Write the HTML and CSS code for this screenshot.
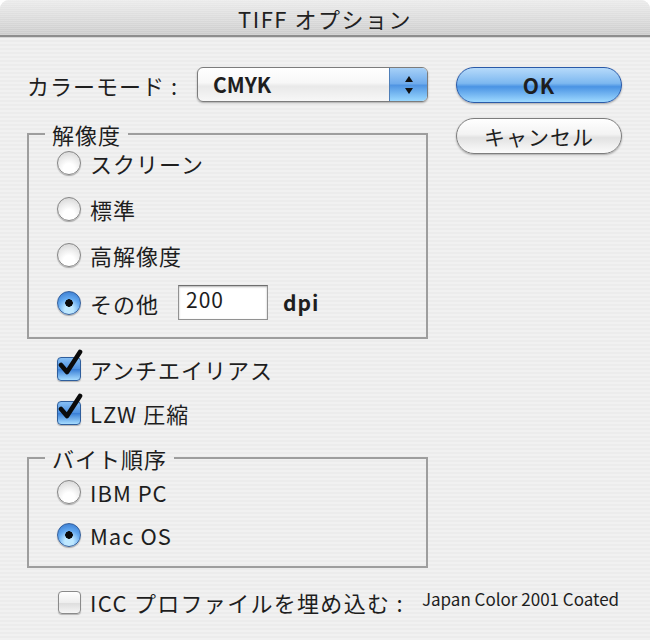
FILE: index.html
```html
<!DOCTYPE html>
<html lang="ja">
<head>
<meta charset="utf-8">
<title>TIFF オプション</title>
<link rel="stylesheet" href="styles.css">
</head>
<body>
<div class="dialog">
  <div class="titlebar">TIFF オプション</div>
  <div class="content">
    <div class="main">
      <div class="left">
        <div class="mode-row">
          <span class="label">カラーモード :</span>
          <div class="popup">
            <span class="popup-value">CMYK</span>
            <span class="stepper">
              <svg width="12" height="24" viewBox="0 0 12 24"><path d="M6 3 L10 9 L2 9 Z" fill="#111"/><path d="M2 15 L10 15 L6 21 Z" fill="#111"/></svg>
            </span>
          </div>
        </div>

        <fieldset class="group res">
          <legend>解像度</legend>
          <div class="options">
            <div class="opt"><span class="radio"></span><span>スクリーン</span></div>
            <div class="opt"><span class="radio"></span><span>標準</span></div>
            <div class="opt"><span class="radio"></span><span>高解像度</span></div>
            <div class="opt opt-field"><span class="radio on"></span><span>その他</span><span class="field">200</span><span class="unit">dpi</span></div>
          </div>
        </fieldset>

        <div class="checks">
          <div class="opt check-row"><span class="check on"><svg class="tick" width="28" height="30" viewBox="0 0 28 30"><path d="M5 16 L11 23 L24 3" fill="none" stroke="#0b0b0b" stroke-width="4.6" stroke-linecap="round" stroke-linejoin="round"/></svg></span><span>アンチエイリアス</span></div>
          <div class="opt check-row"><span class="check on"><svg class="tick" width="28" height="30" viewBox="0 0 28 30"><path d="M5 16 L11 23 L24 3" fill="none" stroke="#0b0b0b" stroke-width="4.6" stroke-linecap="round" stroke-linejoin="round"/></svg></span><span>LZW 圧縮</span></div>
        </div>

        <fieldset class="group order">
          <legend>バイト順序</legend>
          <div class="options order-options">
            <div class="opt"><span class="radio"></span><span>IBM PC</span></div>
            <div class="opt"><span class="radio on"></span><span>Mac OS</span></div>
          </div>
        </fieldset>
      </div>

      <div class="buttons">
        <div class="btn btn-default">OK</div>
        <div class="btn">キャンセル</div>
      </div>
    </div>

    <div class="icc-row">
      <span class="check"></span>
      <span class="icc-label">ICC プロファイルを埋め込む :</span>
      <span class="profile">Japan Color 2001 Coated</span>
    </div>
  </div>
</div>
</body>
</html>
```

FILE: styles.css
```css
html, body {
  margin: 0;
  background: #ffffff;
}

body {
  font-family: "Noto Sans CJK JP", "DejaVu Sans", sans-serif;
  color: #1e1e1e;
}

.dialog {
  width: 650px;
  height: 640px;
  border-radius: 9px 9px 0 0;
  overflow: hidden;
  background: repeating-linear-gradient(to bottom, #ececec 0 2px, #f1f1f1 2px 4px);
}

.titlebar {
  height: 35px;
  border-bottom: 2px solid #8e8e8e;
  box-shadow: 0 1px 0 #d6d6d6;
  background:
    repeating-linear-gradient(to bottom, rgba(255,255,255,0.18) 0 1px, rgba(0,0,0,0) 1px 2px),
    linear-gradient(#ebebeb, #d9d9d9 60%, #cbcbcb);
  display: flex;
  align-items: center;
  justify-content: center;
  font-size: 22px;
  letter-spacing: 1.5px;
  color: #222;
  line-height: 1;
}

.content {
  padding: 30px 0 0 27px;
}

.main {
  display: flex;
  gap: 28px;
}

.left {
  width: 401px;
  display: flex;
  flex-direction: column;
}

.mode-row {
  display: flex;
  align-items: center;
  height: 35px;
}

.label {
  width: 170px;
  font-size: 22px;
  line-height: 1;
  letter-spacing: 1px;
}

.popup {
  width: 231px;
  height: 35px;
  box-sizing: border-box;
  border: 1px solid #7c7c7c;
  border-radius: 6px;
  display: flex;
  overflow: hidden;
  background: linear-gradient(#ffffff, #f7f7f7 45%, #e9e9e9 55%, #f7f7f7);
  box-shadow: 0 1px 2px rgba(0,0,0,0.3);
}

.popup-value {
  flex: 1;
  padding-left: 15px;
  font-weight: bold;
  font-size: 21px;
  line-height: 33px;
}

.stepper {
  width: 37px;
  background: linear-gradient(#a6d0f7, #6fabec 48%, #4f94e2 52%, #9ad8ff);
  border-left: 1px solid #4f7fb8;
  display: flex;
  align-items: center;
  justify-content: center;
}

.group {
  margin: 0;
  min-width: 0;
  border: 2px solid #9e9e9e;
  padding: 0 0 17px 16px;
}

.group legend {
  padding: 0 7px;
  font-size: 22px;
  line-height: 26px;
  letter-spacing: 1px;
}

.res {
  margin-top: 19px;
}

.options {
  display: flex;
  flex-direction: column;
  gap: 14px;
  margin-left: 12px;
}

.opt {
  display: flex;
  align-items: center;
  height: 32px;
  font-size: 22px;
  line-height: 1;
  gap: 9px;
  letter-spacing: 1px;
}

.opt-field {
  height: 35px;
}

.radio {
  width: 24px;
  height: 24px;
  box-sizing: border-box;
  border-radius: 50%;
  border: 1px solid #858585;
  background: radial-gradient(circle at 50% 78%, #ffffff 0 28%, #ececec 58%, #cfcfcf 100%);
  box-shadow: 0 1px 1px rgba(0,0,0,0.3);
  flex: none;
  position: relative;
}

.radio.on {
  border-color: #35609c;
  background:
    radial-gradient(circle at 50% 50%, #0a0a0a 0 3.5px, rgba(0,0,0,0) 4px),
    radial-gradient(circle at 50% 80%, #bfe8ff 0 20%, #62a8ef 55%, #2f6fc8 100%);
}

.field {
  width: 90px;
  height: 35px;
  box-sizing: border-box;
  border: 1px solid #929292;
  border-top-color: #6e6e6e;
  background: #ffffff;
  box-shadow: inset 0 1px 2px rgba(0,0,0,0.3);
  font-size: 21px;
  line-height: 27px;
  padding-left: 7px;
  margin-left: 10px;
}

.unit {
  margin-left: 6px;
  font-weight: bold;
  font-size: 21px;
}

.checks {
  display: flex;
  flex-direction: column;
  gap: 12px;
  margin: 14px 0 16px 30px;
}

.check {
  width: 24px;
  height: 24px;
  box-sizing: border-box;
  border-radius: 4px;
  border: 1px solid #8a8a8a;
  background: linear-gradient(#ffffff, #eeeeee 50%, #dedede 55%, #f6f6f6);
  box-shadow: 0 1px 1px rgba(0,0,0,0.25);
  flex: none;
  position: relative;
}

.check.on {
  border-color: #2f5e9c;
  background: linear-gradient(#86bff5, #4f92e2 48%, #3a7fd6 52%, #a6dcff);
}

.tick {
  position: absolute;
  left: -2px;
  top: -9px;
}

.order {
  margin-top: 0;
  padding-bottom: 15px;
}

.order-options {
  padding-top: 5px;
  gap: 11px;
}

.buttons {
  width: 166px;
  display: flex;
  flex-direction: column;
  gap: 15px;
}

.btn {
  height: 36px;
  box-sizing: border-box;
  border-radius: 18px;
  border: 1px solid #7d7d7d;
  background: linear-gradient(#ffffff, #f3f3f3 45%, #e2e2e2 55%, #fbfbfb);
  box-shadow: 0 1px 2px rgba(0,0,0,0.3);
  display: flex;
  align-items: center;
  justify-content: center;
  font-size: 21px;
  line-height: 1;
  letter-spacing: 1px;
}

.btn-default {
  border-color: #2a5aa8;
  background: linear-gradient(#b6dafa, #7db8f0 45%, #4a93e4 55%, #9ed9ff);
  font-weight: bold;
}

.icc-row {
  display: flex;
  align-items: center;
  height: 32px;
  margin: 18px 0 0 31px;
  font-size: 22px;
  line-height: 1;
}

.icc-row .check {
  width: 23px;
  height: 23px;
}

.icc-label {
  margin-left: 9px;
  letter-spacing: 1.3px;
}

.profile {
  margin-left: 18px;
  font-size: 17px;
  position: relative;
  top: -4px;
}
```
